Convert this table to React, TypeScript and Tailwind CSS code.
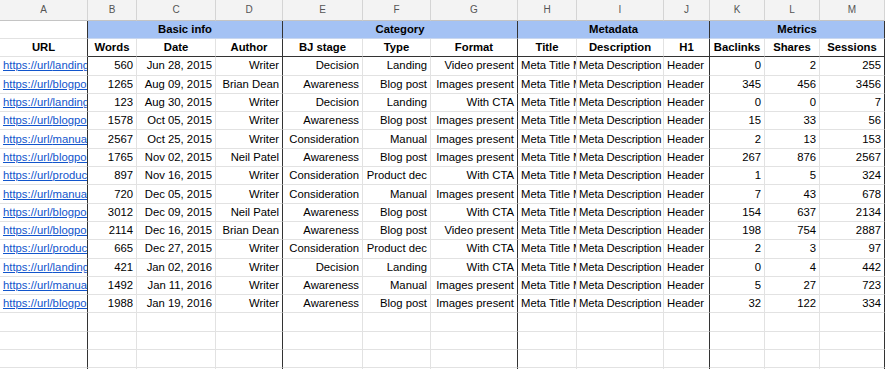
import React from "react";

type Row = {
  url: string;
  words: number;
  date: string;
  author: string;
  stage: string;
  type: string;
  format: string;
  backlinks: number;
  shares: number;
  sessions: number;
};

const rows: Row[] = [
  { url: "landing", words: 560, date: "Jun 28, 2015", author: "Writer", stage: "Decision", type: "Landing", format: "Video present", backlinks: 0, shares: 2, sessions: 255 },
  { url: "blogpost", words: 1265, date: "Aug 09, 2015", author: "Brian Dean", stage: "Awareness", type: "Blog post", format: "Images present", backlinks: 345, shares: 456, sessions: 3456 },
  { url: "landing", words: 123, date: "Aug 30, 2015", author: "Writer", stage: "Decision", type: "Landing", format: "With CTA", backlinks: 0, shares: 0, sessions: 7 },
  { url: "blogpost", words: 1578, date: "Oct 05, 2015", author: "Writer", stage: "Awareness", type: "Blog post", format: "Images present", backlinks: 15, shares: 33, sessions: 56 },
  { url: "manual", words: 2567, date: "Oct 25, 2015", author: "Writer", stage: "Consideration", type: "Manual", format: "Images present", backlinks: 2, shares: 13, sessions: 153 },
  { url: "blogpost", words: 1765, date: "Nov 02, 2015", author: "Neil Patel", stage: "Awareness", type: "Blog post", format: "Images present", backlinks: 267, shares: 876, sessions: 2567 },
  { url: "product", words: 897, date: "Nov 16, 2015", author: "Writer", stage: "Consideration", type: "Product dec", format: "With CTA", backlinks: 1, shares: 5, sessions: 324 },
  { url: "manual", words: 720, date: "Dec 05, 2015", author: "Writer", stage: "Consideration", type: "Manual", format: "Images present", backlinks: 7, shares: 43, sessions: 678 },
  { url: "blogpost", words: 3012, date: "Dec 09, 2015", author: "Neil Patel", stage: "Awareness", type: "Blog post", format: "With CTA", backlinks: 154, shares: 637, sessions: 2134 },
  { url: "blogpost", words: 2114, date: "Dec 16, 2015", author: "Brian Dean", stage: "Awareness", type: "Blog post", format: "Video present", backlinks: 198, shares: 754, sessions: 2887 },
  { url: "product", words: 665, date: "Dec 27, 2015", author: "Writer", stage: "Consideration", type: "Product dec", format: "With CTA", backlinks: 2, shares: 3, sessions: 97 },
  { url: "landing", words: 421, date: "Jan 02, 2016", author: "Writer", stage: "Decision", type: "Landing", format: "With CTA", backlinks: 0, shares: 4, sessions: 442 },
  { url: "manual", words: 1492, date: "Jan 11, 2016", author: "Writer", stage: "Awareness", type: "Manual", format: "Images present", backlinks: 5, shares: 27, sessions: 723 },
  { url: "blogpost", words: 1988, date: "Jan 19, 2016", author: "Writer", stage: "Awareness", type: "Blog post", format: "Images present", backlinks: 32, shares: 122, sessions: 334 },
];

const letters = ["A", "B", "C", "D", "E", "F", "G", "H", "I", "J", "K", "L", "M"];
// columns that end a group get a dark right edge
const darkRight = [0, 3, 6, 9, 12];

const grid = "grid grid-cols-[88px_49px_79px_67px_80px_68px_87px_59px_87px_46px_55px_55px_65px]";

function Cell({
  col,
  align = "right",
  children,
  bold,
  darkBottom,
  className = "px-[3px]",
}: {
  col: number;
  align?: "left" | "right" | "center";
  children?: React.ReactNode;
  bold?: boolean;
  darkBottom?: boolean;
  className?: string;
}) {
  const dark = darkRight.includes(col);
  return (
    <div
      className={[
        "h-[18.3px] flex items-center overflow-hidden whitespace-nowrap border-b border-r",
        className,
        dark ? "border-r-[#333]" : "border-r-[#e2e2e2]",
        darkBottom ? "border-b-[#333]" : "border-b-[#e2e2e2]",
        align === "right" ? "justify-end" : align === "center" ? "justify-center" : "justify-start",
        bold ? "font-bold" : "",
      ].join(" ")}
    >
      {children}
    </div>
  );
}

export default function App() {
  return (
    <div className="w-[885px] h-[369px] overflow-hidden bg-white text-[11.3px] text-black font-['Liberation_Sans',Arial,sans-serif]">
      {/* Column letters */}
      <div className={`${grid} h-[20.7px] bg-[#f3f3f3] text-[#555] text-[10px]`}>
        {letters.map((l) => (
          <div key={l} className="flex items-center justify-center border-r border-b border-r-[#d4d4d4] border-b-[#c4c4c4]">
            {l}
          </div>
        ))}
      </div>

      {/* Group headers */}
      <div className={grid}>
        <div className="h-[18.3px] border-b border-r border-b-[#e2e2e2] border-r-[#333]" />
        {[
          ["Basic info", "col-span-3"],
          ["Category", "col-span-3"],
          ["Metadata", "col-span-3"],
          ["Metrics", "col-span-3"],
        ].map(([t, span]) => (
          <div
            key={t}
            className={`${span} h-[18.3px] flex items-center justify-center font-bold bg-[#a4c2f4] border-b border-r border-b-[#c9d7ef] border-r-[#333]`}
          >
            {t}
          </div>
        ))}
      </div>

      {/* Column titles */}
      <div className={grid}>
        <Cell col={0} align="center" bold>URL</Cell>
        {["Words", "Date", "Author", "BJ stage", "Type", "Format", "Title", "Description", "H1", "Baclinks", "Shares", "Sessions"].map((t, i) => (
          <Cell key={t} col={i + 1} align="center" bold darkBottom className="px-0">
            {t}
          </Cell>
        ))}
      </div>

      {/* Data */}
      {rows.map((r, i) => (
        <div key={i} className={grid}>
          <Cell col={0} align="left">
            <span className="text-[#1155cc] underline">https://url/{r.url}</span>
          </Cell>
          <Cell col={1}>{r.words}</Cell>
          <Cell col={2}>{r.date}</Cell>
          <Cell col={3}>{r.author}</Cell>
          <Cell col={4}>{r.stage}</Cell>
          <Cell col={5}>{r.type}</Cell>
          <Cell col={6} className="pl-0 pr-[3px]">{r.format}</Cell>
          <Cell col={7} align="left">Meta Title Meta</Cell>
          <Cell col={8} align="left" className="pl-[2px] pr-0 tracking-[-0.15px]">Meta Description</Cell>
          <Cell col={9} align="left">Header</Cell>
          <Cell col={10}>{r.backlinks}</Cell>
          <Cell col={11}>{r.shares}</Cell>
          <Cell col={12}>{r.sessions}</Cell>
        </div>
      ))}

      {/* Empty rows */}
      {[0, 1, 2, 3].map((e) => (
        <div key={`e${e}`} className={grid}>
          {letters.map((l, c) => (
            <Cell key={l} col={c} />
          ))}
        </div>
      ))}
    </div>
  );
}
